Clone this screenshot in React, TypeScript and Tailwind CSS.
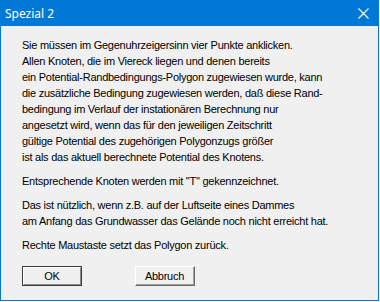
import React from 'react';

const paragraphs: string[][] = [
  [
    'Sie müssen im Gegenuhrzeigersinn vier Punkte anklicken.',
    'Allen Knoten, die im Viereck liegen und denen bereits',
    'ein Potential-Randbedingungs-Polygon zugewiesen wurde, kann',
    'die zusätzliche Bedingung zugewiesen werden, daß diese Rand-',
    'bedingung im Verlauf der instationären Berechnung nur',
    'angesetzt wird, wenn das für den jeweiligen Zeitschritt',
    'gültige Potential des zugehörigen Polygonzugs größer',
    'ist als das aktuell berechnete Potential des Knotens.',
  ],
  ['Entsprechende Knoten werden mit "T" gekennzeichnet.'],
  [
    'Das ist nützlich, wenn z.B. auf der Luftseite eines Dammes',
    'am Anfang das Grundwasser das Gelände noch nicht erreicht hat.',
  ],
  ['Rechte Maustaste setzt das Polygon zurück.'],
];

const CloseIcon = () => (
  <svg width="11" height="11" viewBox="0 0 11 11" className="block">
    <path d="M0.5 0.5 L10.5 10.5 M10.5 0.5 L0.5 10.5" stroke="#fff" strokeWidth="1.1" />
  </svg>
);

export default function App() {
  return (
    <div className="w-[380px] h-[302px] bg-white">
      <div className="w-[379px] h-[301px] flex flex-col border border-[#0078d7] bg-[#f0f0f0]">
        {/* title bar */}
        <div className="h-[25px] bg-[#0078d7] flex items-center justify-between pl-[4px] pr-[9px] shrink-0">
          <span className="text-white text-[12px] font-['Noto_Sans',sans-serif] leading-none">Spezial 2</span>
          <CloseIcon />
        </div>

        <div className="flex-1 pl-[21px] pt-[11px] font-['Liberation_Sans',Arial,sans-serif] text-[11px] leading-[16px] tracking-[-0.25px] text-black">
          <div className="flex flex-col gap-[8px]">
            {paragraphs.map((lines, i) => (
              <p key={i}>
                {lines.map((l, j) => (
                  <span key={j} className="block whitespace-nowrap">{l}</span>
                ))}
              </p>
            ))}
          </div>

          <div className="flex gap-[53px] mt-[13px]">
            {/* default button */}
            <button className="w-[60px] h-[20px] border border-[#3c3c3c] bg-[#f0f0f0] p-0">
              <div className="w-full h-full border-t border-l border-white border-b border-r border-b-[#8a8a8a] border-r-[#8a8a8a] flex items-center justify-center text-[11px]">
                OK
              </div>
            </button>
            <button className="w-[60px] h-[20px] border border-t-white border-l-white border-b-[#696969] border-r-[#696969] bg-[#f0f0f0] p-0">
              <div className="w-full h-full border-b border-r border-[#a0a0a0] flex items-center justify-center text-[11px]">
                Abbruch
              </div>
            </button>
          </div>
        </div>
      </div>
    </div>
  );
}
